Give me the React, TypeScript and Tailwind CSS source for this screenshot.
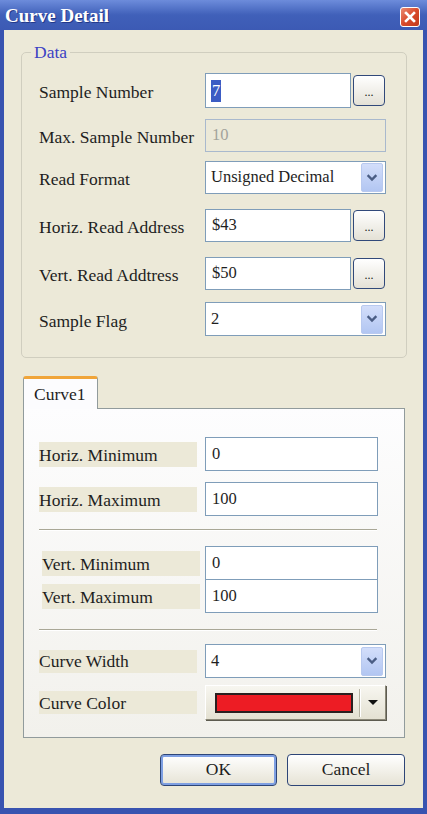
import React from "react";

const Chevron = () => (
  <svg width="12" height="10" viewBox="0 0 12 10">
    <path d="M2.5 3 L6 6.5 L9.5 3" fill="none" stroke="#4a5d84" strokeWidth="2.4" strokeLinecap="square" />
  </svg>
);

const DropBtn = () => (
  <div className="w-[22px] h-[29px] mr-[2px] rounded-[2px] border border-[#b8c9ef] bg-gradient-to-b from-[#d3defa] to-[#b2c6f2] flex items-center justify-center">
    <Chevron />
  </div>
);

const Dots = () => (
  <div className="ml-[2px] w-[32px] h-[31px] rounded-[4px] border border-[#31497a] bg-gradient-to-b from-[#ffffff] to-[#e4e1d6] flex items-end justify-center pb-[7px] text-[12px] leading-none text-[#222]">
    ...
  </div>
);

const Row = ({ label, mt, h, children }: { label: string; mt: string; h: string; children: React.ReactNode }) => (
  <div className={`flex items-center ${mt} ${h}`}>
    <div className="w-[166px] text-[17.5px] text-[#1e1e1e] leading-none pt-[5px]">{label}</div>
    {children}
  </div>
);

const Select = ({ value, w }: { value: string; w: string }) => (
  <div className={`${w} h-full bg-white border border-[#7f9db9] flex items-center justify-between pl-[5px]`}>
    <span className="text-[16.5px] text-[#1e1e1e]">{value}</span>
    <DropBtn />
  </div>
);

export default function App() {
  return (
    <div className="w-[427px] h-[814px] bg-[#3853b0] flex flex-col font-['Liberation_Serif',serif]">
      {/* title bar */}
      <div className="h-[30px] shrink-0 flex items-center justify-between pl-[5px] pr-[7px] bg-gradient-to-b from-[#6d8cdb] via-[#4060b9] to-[#3c5ab4]">
        <span className="text-white font-bold text-[19px] leading-none pt-[1px] [text-shadow:1px_1px_0_#23398a]">Curve Detail</span>
        <div className="w-[20px] h-[20px] mt-[4px] rounded-[3px] border border-white bg-gradient-to-br from-[#e98a72] via-[#d9492a] to-[#c23a1c] flex items-center justify-center">
          <svg width="12" height="12" viewBox="0 0 12 12">
            <path d="M2 2 L10 10 M10 2 L2 10" stroke="white" strokeWidth="2.6" strokeLinecap="square" />
          </svg>
        </div>
      </div>

      {/* body */}
      <div className="flex-1 ml-[4px] mr-[4px] mb-[6px] bg-[#ECE9D8] flex flex-col pt-[13px] pl-[17px] pr-[16px]">
        <fieldset className="w-[386px] border border-[#d0cebf] rounded-[5px]">
          <legend className="ml-[9px] px-[3px] text-[17.5px] leading-[18px] text-[#3d43c4]">Data</legend>
          <div className="flex flex-col pl-[17px] pb-[21px]">
            <Row label="Sample Number" mt="mt-[12px]" h="h-[35px]">
              <div className="w-[146px] h-full bg-white border border-[#7f9db9] flex items-center pl-[5px]">
                <span className="inline-block bg-[#3b5cc4] text-white text-[16.5px] leading-[22px] px-[1px]">7</span>
              </div>
              <Dots />
            </Row>
            <Row label="Max. Sample Number" mt="mt-[11px]" h="h-[33px]">
              <div className="w-[181px] h-full bg-[#ECE9D8] border border-[#a9b9cd] flex items-center pl-[6px]">
                <span className="text-[16.5px] text-[#a3a39c]">10</span>
              </div>
            </Row>
            <Row label="Read Format" mt="mt-[9px]" h="h-[33px]">
              <Select value="Unsigned Decimal" w="w-[181px]" />
            </Row>
            <Row label="Horiz. Read Address" mt="mt-[15px]" h="h-[33px]">
              <div className="w-[146px] h-full bg-white border border-[#7f9db9] flex items-center pl-[6px]">
                <span className="text-[16.5px] text-[#1e1e1e]">$43</span>
              </div>
              <Dots />
            </Row>
            <Row label="Vert. Read Addtress" mt="mt-[15px]" h="h-[33px]">
              <div className="w-[146px] h-full bg-white border border-[#7f9db9] flex items-center pl-[6px]">
                <span className="text-[16.5px] text-[#1e1e1e]">$50</span>
              </div>
              <Dots />
            </Row>
            <Row label="Sample Flag" mt="mt-[12px]" h="h-[34px]">
              <Select value="2" w="w-[181px]" />
            </Row>
          </div>
        </fieldset>

        {/* tab */}
        <div className="mt-[18px] ml-[2px] flex flex-col">
          <div className="relative z-10 -mb-[1px] w-[75px] h-[33px] bg-[#fcfcfe] border-x border-[#919b9c] rounded-t-[3px] border-t-[3px] border-t-[#f0a53a] pl-[10px] pt-[4px]">
            <span className="text-[17.5px] text-[#1e1e1e] leading-none">Curve1</span>
          </div>
          <div className="w-[382px] h-[330px] border border-[#919b9c] bg-gradient-to-b from-[#fdfdfe] to-[#f2f1ec] flex flex-col pl-[15px]">
            <PanelRow label="Horiz. Minimum" mt="mt-[28px]" value="0" />
            <PanelRow label="Horiz. Maximum" mt="mt-[11px]" value="100" />
            <div className="mt-[13px] w-[338px] h-[2px] border-t border-[#a9a796] border-b border-b-white" />
            <PanelRow label="Vert. Minimum" mt="mt-[15px]" value="0" vert />
            <PanelRow label="Vert. Maximum" mt="-mt-[1px]" value="100" vert />
            <div className="mt-[16px] w-[338px] h-[2px] border-t border-[#a9a796] border-b border-b-white" />
            <div className="mt-[13px] h-[34px] flex items-center">
              <div className="w-[158px] h-[23px] bg-[#ECE9D8] mr-[8px] flex items-center text-[17.5px] text-[#1e1e1e] leading-none pt-[2px]">Curve Width</div>
              <Select value="4" w="w-[181px]" />
            </div>
            <div className="mt-[7px] h-[35px] flex items-center">
              <div className="w-[158px] h-[23px] bg-[#ECE9D8] mr-[8px] flex items-center text-[17.5px] text-[#1e1e1e] leading-none pt-[2px]">Curve Color</div>
              <div className="w-[181px] h-full border border-t-white border-l-white border-r-[#8b8878] border-b-[#8b8878] bg-gradient-to-b from-[#f7f6f0] to-[#e4e1d2] shadow-[1px_1px_0_#5d5b50] flex items-center pl-[9px]">
                <div className="w-[138px] h-[20px] bg-[#ed1c24] border-2 border-[#2b2020]" />
                <div className="ml-[6px] w-[2px] h-[28px] border-l border-[#b4b1a2] border-r border-r-white" />
                <svg className="ml-[7px]" width="10" height="6" viewBox="0 0 10 6">
                  <path d="M0 0 L10 0 L5 5 Z" fill="#111" />
                </svg>
              </div>
            </div>
          </div>
        </div>

        {/* buttons */}
        <div className="mt-[16px] flex justify-end gap-[10px] pr-[2px]">
          <div className="w-[117px] h-[32px] rounded-[4px] border border-[#2d4577] bg-gradient-to-b from-[#ffffff] to-[#e6e3d5] shadow-[inset_0_0_0_2px_#7e9fe2] flex items-center justify-center text-[17.5px] text-[#1e1e1e] leading-none">OK</div>
          <div className="w-[118px] h-[32px] rounded-[4px] border border-[#2d4577] bg-gradient-to-b from-[#ffffff] to-[#e6e3d5] flex items-center justify-center text-[17.5px] text-[#1e1e1e] leading-none">Cancel</div>
        </div>
      </div>
    </div>
  );
}

function PanelRow({ label, mt, value, vert }: { label: string; mt: string; value: string; vert?: boolean }) {
  return (
    <div className={`flex items-center h-[34px] ${mt}`}>
      <div className={`${vert ? "ml-[3px] mr-[5px]" : "mr-[8px]"} w-[158px] h-[25px] bg-[#ECE9D8] flex items-center text-[17.5px] text-[#1e1e1e] leading-none pt-[3px]`}>
        {label}
      </div>
      <div className="w-[173px] h-full bg-white border border-[#7f9db9] flex items-center pl-[6px]">
        <span className="text-[16.5px] text-[#1e1e1e]">{value}</span>
      </div>
    </div>
  );
}
